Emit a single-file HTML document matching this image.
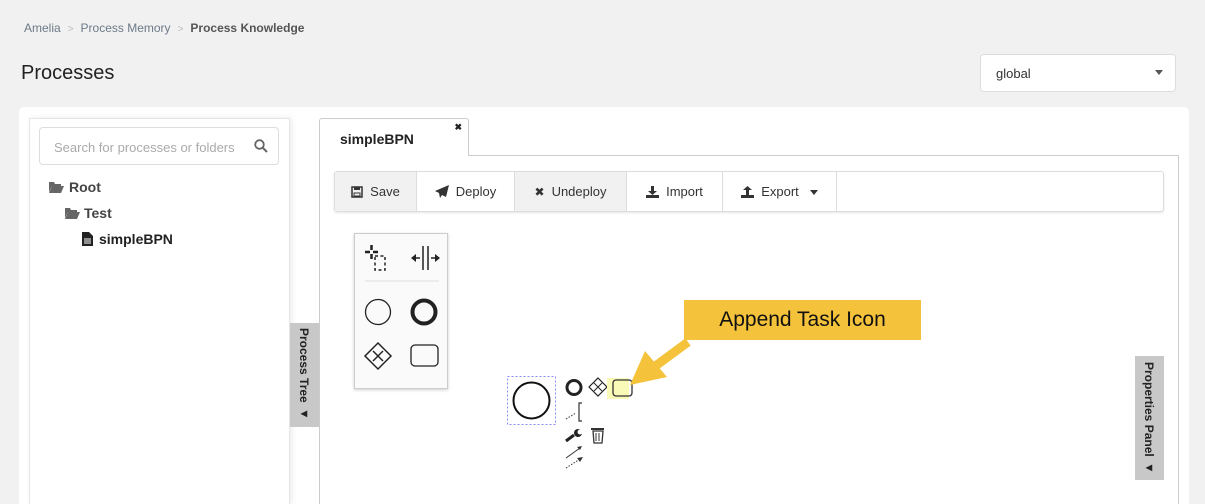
<!DOCTYPE html>
<html><head><meta charset="utf-8"><style>
*{box-sizing:border-box;margin:0;padding:0}
html,body{width:1205px;height:504px;overflow:hidden}
body{background:#f1f1f1;font-family:"Liberation Sans",sans-serif;position:relative;color:#333}
.a{position:absolute}
.crumb{left:24px;top:21px;font-size:12px;color:#6d7a88}
.crumb b{color:#555}
.crumb span.s{color:#bbb;margin:0 7px;font-size:10px}
h1{position:absolute;left:21px;top:62px;font-size:20px;font-weight:normal;color:#222}
.sel{left:980px;top:54px;width:196px;height:38px;background:#fff;border:1px solid #ddd;border-radius:4px;font-size:13px;padding:11px 15px;color:#333}
.card{left:19px;top:107px;width:1170px;height:397px;background:#fff;border-radius:5px 5px 0 0}
.left{left:29px;top:118px;width:261px;height:386px;background:#fff;border:1px solid #e6e6e6;border-bottom:none;box-shadow:2px 0 6px rgba(0,0,0,.08)}
.search{left:39px;top:127px;width:240px;height:38px;border:1px solid #ddd;border-radius:4px;font-size:13px;color:#aaa;padding:12px 14px}
.tree{font-size:14px;font-weight:bold;color:#444}
.ptab{left:290px;top:323px;width:29px;height:104px;background:#c8c8c8}
.vt{writing-mode:vertical-rl;font-size:12px;font-weight:bold;color:#222;position:absolute;left:7px;top:5px}
.tab{left:319px;top:118px;width:150px;height:38px;background:#fff;border:1px solid #ccc;border-bottom:none;border-radius:3px 3px 0 0;font-size:14px;font-weight:bold;padding:12px 20px;color:#222}
.box{left:319px;top:155px;width:860px;height:349px;border:1px solid #ccc;border-bottom:none;background:#fff}
.tb{left:334px;top:171px;width:830px;height:41px;border:1px solid #ddd;border-radius:3px;box-shadow:0 1px 2px rgba(0,0,0,.1);display:flex;background:#fff}
.tb div{height:39px;border-right:1px solid #ddd;font-size:13px;color:#333;display:flex;align-items:center;justify-content:center;gap:7px}
.g{background:#f1f1f1}
.pal{left:354px;top:233px;width:94px;height:156px;border:1px solid #ccc;background:#fafafa;box-shadow:0 1px 3px rgba(0,0,0,.2)}
.prop{left:1135px;top:356px;width:29px;height:124px;background:#c8c8c8}
.call{left:684px;top:300px;width:237px;height:40px;background:#f5c33b;font-size:21px;color:#111;text-align:center;line-height:40px}
</style></head><body>
<div class="a crumb">Amelia<span class="s">&gt;</span>Process Memory<span class="s">&gt;</span><b>Process Knowledge</b></div>
<h1>Processes</h1>
<div class="a sel">global<span style="position:absolute;right:12px;top:15px;border:4px solid transparent;border-top:5px solid #555"></span></div>
<div class="a card"></div>
<div class="a left"></div>
<div class="a search">Search for processes or folders
<svg class="a" style="left:214px;top:11px" width="14" height="14" viewBox="0 0 14 14"><circle cx="5.5" cy="5.5" r="4.3" fill="none" stroke="#666" stroke-width="1.8"/><path d="M8.5 8.5L13 13" stroke="#666" stroke-width="2"/></svg></div>
<svg class="a" style="left:49px;top:181px" width="15" height="12"><path d="M0 1h5l1 2h6v2H3L0 11z" fill="#666"/><path d="M3 5h12l-3 7H0z" fill="#666"/></svg>
<div class="a tree" style="left:69px;top:179px">Root</div>
<svg class="a" style="left:65px;top:207px" width="15" height="12"><path d="M0 1h5l1 2h6v2H3L0 11z" fill="#666"/><path d="M3 5h12l-3 7H0z" fill="#666"/></svg>
<div class="a tree" style="left:84px;top:205px">Test</div>
<svg class="a" style="left:82px;top:232px" width="11" height="14"><path d="M0 0h7l4 4v10H0z" fill="#222"/><path d="M2 7h7M2 9h7M2 11h7" stroke="#fff"/></svg>
<div class="a tree" style="left:99px;top:231px;color:#222">simpleBPN</div>
<div class="a ptab"><div class="vt">Process Tree ◂</div></div>
<div class="a box"></div>
<div class="a tab">simpleBPN<span style="position:absolute;right:6px;top:3px;font-size:9px">✖</span></div>
<div class="a tb">
<div class="g" style="width:82px"><svg width="12" height="12"><rect x="1" y="1" width="10" height="10" fill="none" stroke="#333" stroke-width="1.5"/><rect x="3" y="1" width="6" height="3" fill="#333"/><rect x="3" y="7" width="6" height="3" fill="none" stroke="#333"/></svg>Save</div>
<div style="width:98px"><svg width="14" height="13"><path d="M14 0L0 6l4 2 1 5 2-3 4 2z" fill="#333"/></svg>Deploy</div>
<div class="g" style="width:112px"><span style="font-size:12px">✖</span>Undeploy</div>
<div style="width:96px"><svg width="13" height="12"><path d="M5 0h3v5h3L6.5 9 2 5h3z" fill="#333"/><rect x="0" y="9" width="13" height="3" fill="#333"/></svg>Import</div>
<div style="width:114px"><svg width="13" height="12"><path d="M5 9h3V4h3L6.5 0 2 4h3z" fill="#333"/><rect x="0" y="9" width="13" height="3" fill="#333"/></svg>Export <span style="border:4px solid transparent;border-top:5px solid #333;margin-top:5px;margin-left:4px"></span></div>
</div>
<div class="a pal">
<svg width="94" height="156">
<g stroke="#222" stroke-width="2.5"><path d="M10 18h5M18 18h5M16.5 11v5M16.5 20v5"/></g>
<rect x="20" y="22" width="10" height="14" fill="none" stroke="#222" stroke-width="1.5" stroke-dasharray="3 2.5"/>
<path d="M68 12v24M73 12v24" stroke="#222" stroke-width="1.5"/>
<path d="M56 24l5-4v8zM85 24l-5-4v8z" fill="#222"/><path d="M60 24h5M76 24h5" stroke="#222" stroke-width="1.5"/>
<path d="M10 47h74" stroke="#ddd"/>
<circle cx="23" cy="78" r="12.5" fill="none" stroke="#222" stroke-width="1.3"/>
<circle cx="69" cy="78" r="11.5" fill="none" stroke="#222" stroke-width="4"/>
<path d="M23 109l13 13-13 13-13-13z" fill="none" stroke="#222" stroke-width="1.5"/><path d="M18 117l10 10M28 117l-10 10" stroke="#222" stroke-width="1.5"/>
<rect x="56" y="111" width="27" height="21" rx="4" fill="none" stroke="#222" stroke-width="1.3"/>
</svg></div>
<svg class="a" style="left:500px;top:290px" width="450" height="190">
<rect x="7.5" y="86.5" width="48" height="48" fill="none" stroke="#8888ff" stroke-dasharray="2 2"/>
<circle cx="31.5" cy="110.5" r="18" fill="none" stroke="#111" stroke-width="2"/>
<circle cx="74" cy="97.5" r="7" fill="none" stroke="#222" stroke-width="3"/>
<path d="M98 88l9 9-9 9-9-9z" fill="none" stroke="#222" stroke-width="1.2"/><path d="M94 93l8 8M102 93l-8 8" stroke="#222"/>
<rect x="107" y="88" width="22" height="21" fill="#fafab8"/>
<rect x="113" y="90" width="19" height="16" rx="3" fill="none" stroke="#333" stroke-width="1.3"/>
<path d="M66 129l10-6" stroke="#333" stroke-dasharray="1.5 1.5"/><path d="M82 113h-3v18h3" fill="none" stroke="#333" stroke-width="1.2"/>
<path d="M66 151l8-6" stroke="#222" stroke-width="3"/><circle cx="78" cy="143" r="4" fill="#222"/><circle cx="80" cy="142" r="2.5" fill="#fff"/>
<rect x="91" y="138" width="13" height="2" fill="#333"/><path d="M93 141h10l-1 12h-8z" fill="none" stroke="#333" stroke-width="1.3"/><path d="M96 143v8M99 143v8" stroke="#333"/>
<path d="M66 168l14-10" stroke="#333"/><path d="M82 156l-5 1 3 3z" fill="#333"/><path d="M66 178l14-9" stroke="#333" stroke-dasharray="1.5 1.5"/><path d="M83 167l-6 1 3 4z" fill="#333"/>
<path d="M188 52L150 80" stroke="#f5c33b" stroke-width="9"/><path d="M130 95l15-34 22 26z" fill="#f5c33b"/>
</svg>
<div class="a call">Append Task Icon</div>
<div class="a prop"><div class="vt" style="top:6px">Properties Panel ◂</div></div>
</body></html>
